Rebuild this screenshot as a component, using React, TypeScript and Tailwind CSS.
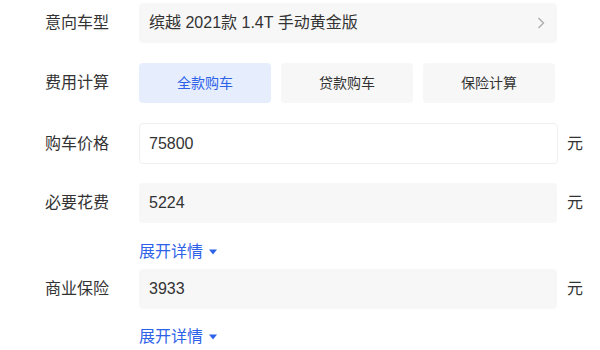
import React, { useState } from "react";

const font = { fontFamily: '"Liberation Sans", "Noto Sans CJK SC", sans-serif' };

function Label({ children }: { children: React.ReactNode }) {
  return <div className="w-[139px] shrink-0 pl-[45px] text-[16px] text-[#333]">{children}</div>;
}

function ExpandLink() {
  return (
    <div className="flex items-center h-[22px] pl-[139px] text-[16px] text-[#2d62e8]">
      <span>展开详情</span>
      <svg className="ml-[6px]" width="8" height="6" viewBox="0 0 8 6">
        <path d="M0 0.5 L8 0.5 L4 5.5 Z" fill="#2d62e8" />
      </svg>
    </div>
  );
}

export default function App() {
  const [mode, setMode] = useState(0);
  const modes = ["全款购车", "贷款购车", "保险计算"];

  return (
    <div className="w-[600px] h-[350px] bg-white overflow-hidden pt-[3px]" style={font}>
      {/* 意向车型 */}
      <div className="flex items-center h-10">
        <Label>意向车型</Label>
        <div className="w-[418px] h-10 rounded-[4px] bg-[#f7f7f7] flex items-center justify-between pl-[10px] pr-[12px] text-[16px] text-[#333]">
          <span>缤越 2021款 1.4T 手动黄金版</span>
          <svg width="8" height="12" viewBox="0 0 8 12">
            <path d="M1.5 1 L6.5 6 L1.5 11" fill="none" stroke="#aaa" strokeWidth="1.3" />
          </svg>
        </div>
      </div>

      {/* 费用计算 */}
      <div className="flex items-center h-10 mt-5">
        <Label>费用计算</Label>
        <div className="flex gap-[10px]">
          {modes.map((m, i) => (
            <button
              key={m}
              onClick={() => setMode(i)}
              className={
                i === mode
                  ? "w-[132px] h-10 rounded-[4px] bg-[#e6eefe] text-[14px] text-[#2d62e8]"
                  : "w-[132px] h-10 rounded-[4px] bg-[#f7f7f7] text-[14px] text-[#333]"
              }
            >
              {m}
            </button>
          ))}
        </div>
      </div>

      {/* 购车价格 */}
      <div className="flex items-center h-[41px] mt-5">
        <Label>购车价格</Label>
        <div className="w-[419px] h-[41px] rounded-[4px] border border-[#f0f0f0] bg-white flex items-center pl-[9px] text-[16px] text-[#333]">
          75800
        </div>
        <span className="ml-[9px] text-[16px] text-[#333]">元</span>
      </div>

      {/* 必要花费 */}
      <div className="flex items-center h-10 mt-[19px]">
        <Label>必要花费</Label>
        <div className="w-[418px] h-10 rounded-[4px] bg-[#f7f7f7] flex items-center pl-[10px] text-[16px] text-[#333]">
          5224
        </div>
        <span className="ml-[10px] text-[16px] text-[#333]">元</span>
      </div>

      <div className="mt-[18px]">
        <ExpandLink />
      </div>

      {/* 商业保险 */}
      <div className="flex items-center h-10 mt-[6px]">
        <Label>商业保险</Label>
        <div className="w-[418px] h-10 rounded-[4px] bg-[#f7f7f7] flex items-center pl-[10px] text-[16px] text-[#333]">
          3933
        </div>
        <span className="ml-[10px] text-[16px] text-[#333]">元</span>
      </div>

      <div className="mt-[17px]">
        <ExpandLink />
      </div>
    </div>
  );
}
